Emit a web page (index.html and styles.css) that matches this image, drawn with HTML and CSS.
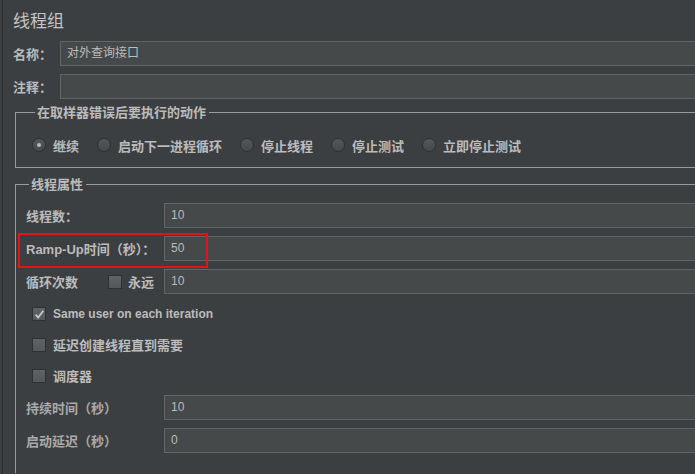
FILE: index.html
```html
<!DOCTYPE html>
<html lang="zh-CN">
<head>
<meta charset="utf-8">
<title>线程组</title>
<link rel="stylesheet" href="styles.css">
</head>
<body>
<div class="panel">
  <h1 class="title">线程组</h1>
  <div class="name-grid">
    <span class="label">名称：</span>
    <div class="field">对外查询接口</div>
    <span class="label">注释：</span>
    <div class="field"></div>
  </div>

  <fieldset class="group on-error">
    <legend>在取样器错误后要执行的动作</legend>
    <div class="radios">
      <span class="radio-item"><span class="radio checked"></span><span class="label">继续</span></span>
      <span class="radio-item"><span class="radio"></span><span class="label">启动下一进程循环</span></span>
      <span class="radio-item"><span class="radio"></span><span class="label">停止线程</span></span>
      <span class="radio-item"><span class="radio"></span><span class="label">停止测试</span></span>
      <span class="radio-item"><span class="radio"></span><span class="label">立即停止测试</span></span>
    </div>
  </fieldset>

  <fieldset class="group props">
    <legend>线程属性</legend>
    <div class="prop-list">
      <div class="row">
        <span class="label cell">线程数：</span>
        <div class="field">10</div>
      </div>
      <div class="row highlighted">
        <span class="label cell">Ramp-Up时间（秒）：</span>
        <div class="field">50</div>
        <span class="mark"></span>
      </div>
      <div class="row">
        <span class="cell loop-cell">
          <span class="label loop-label">循环次数</span>
          <span class="checkbox"></span>
          <span class="label">永远</span>
        </span>
        <div class="field">10</div>
      </div>
      <div class="check-row first">
        <span class="checkbox checked"><svg viewBox="0 0 14 14" width="14" height="14"><path d="M3 6.5 L6 10 L12 2" fill="none" stroke="#c9c9c9" stroke-width="2"/></svg></span>
        <span class="label latin">Same user on each iteration</span>
      </div>
      <div class="check-row">
        <span class="checkbox"></span>
        <span class="label">延迟创建线程直到需要</span>
      </div>
      <div class="check-row">
        <span class="checkbox"></span>
        <span class="label">调度器</span>
      </div>
      <div class="row after-checks">
        <span class="label cell dim">持续时间（秒）</span>
        <div class="field">10</div>
      </div>
      <div class="row last">
        <span class="label cell dim">启动延迟（秒）</span>
        <div class="field">0</div>
      </div>
    </div>
  </fieldset>
</div>
</body>
</html>
```

FILE: styles.css
```css
html, body {
  margin: 0;
  padding: 0;
  background: #3c3f41;
  overflow: hidden;
}
body {
  width: 695px;
  height: 474px;
  font-family: "Liberation Sans", "Noto Sans CJK SC", sans-serif;
  color: #bbbbbb;
}
.panel {
  margin-left: 2px;
  border-left: 1px solid #2c2e30;
  padding-left: 10px;
  height: 474px;
  box-sizing: border-box;
}
.title {
  margin: 0;
  padding-top: 9px;
  font-size: 17px;
  line-height: 22px;
  font-weight: normal;
  font-family: "Noto Sans CJK SC", sans-serif;
  color: #c4c4c4;
}
.label {
  font-size: 13px;
  font-weight: bold;
  font-family: "Liberation Sans", "Noto Sans CJK SC", sans-serif;
  color: #bbbbbb;
  white-space: nowrap;
}
.label.latin {
  font-size: 12px;
}
.field {
  box-sizing: border-box;
  height: 25px;
  background: #45494a;
  border: 1px solid #646464;
  border-right: none;
  padding-left: 6px;
  font-size: 12px;
  line-height: 23px;
  font-family: "Liberation Sans", "Noto Sans CJK SC", sans-serif;
  color: #bbbbbb;
}
.name-grid {
  margin-top: 10px;
  display: grid;
  grid-template-columns: 47px 1fr;
  grid-auto-rows: 25px;
  row-gap: 8px;
  align-items: center;
}
.group {
  margin: 0 0 0 2px;
  border: 1px solid #9b9b9b;
  border-right: none;
  min-width: 0;
}
.group legend {
  margin-left: 3px;
  padding: 0 3px 0 2px;
  font-size: 13px;
  line-height: 16px;
  font-weight: bold;
  font-family: "Noto Sans CJK SC", sans-serif;
  color: #bbbbbb;
}
.on-error {
  margin-top: 5px;
  padding: 18px 0 15px 16px;
}
.radios {
  display: flex;
  align-items: center;
  gap: 18px;
  height: 14px;
}
.radio-item {
  display: flex;
  align-items: center;
  gap: 7px;
}
.radio {
  box-sizing: border-box;
  width: 14px;
  height: 14px;
  border-radius: 50%;
  border: 1px solid #2e3032;
  background: linear-gradient(#53575a, #45494b);
  display: flex;
  align-items: center;
  justify-content: center;
}
.radio.checked::after {
  content: "";
  width: 4px;
  height: 4px;
  border-radius: 50%;
  background: #b8b8b8;
}
.props {
  margin-top: 8px;
  padding: 11px 0 20px 10px;
  border-bottom: none;
}
.prop-list {
  display: flex;
  flex-direction: column;
}
.row {
  display: flex;
  align-items: center;
  height: 25px;
  margin-bottom: 8px;
  position: relative;
}
.row.last {
  margin-bottom: 0;
}
.row .field {
  flex: 1;
}
.cell {
  width: 138px;
  flex: none;
}
.loop-cell {
  display: flex;
  align-items: center;
}
.loop-label {
  width: 82px;
}
.loop-cell .checkbox {
  margin-right: 6px;
}
.checkbox {
  box-sizing: border-box;
  width: 14px;
  height: 14px;
  border: 1px solid #2e3032;
  background: linear-gradient(#606366, #55585a);
  display: inline-flex;
  flex: none;
}
.checkbox svg {
  display: block;
}
.check-row {
  display: flex;
  align-items: center;
  gap: 7px;
  height: 31px;
  padding-left: 6px;
}
.check-row.first {
  margin-top: -4px;
}
.after-checks {
  margin-top: 4px;
}
.dim {
  color: #a9a9a9;
}
.mark {
  position: absolute;
  left: -8px;
  top: -3px;
  width: 190px;
  height: 35px;
  box-sizing: border-box;
  border: 2px solid #e31414;
  pointer-events: none;
}
```
